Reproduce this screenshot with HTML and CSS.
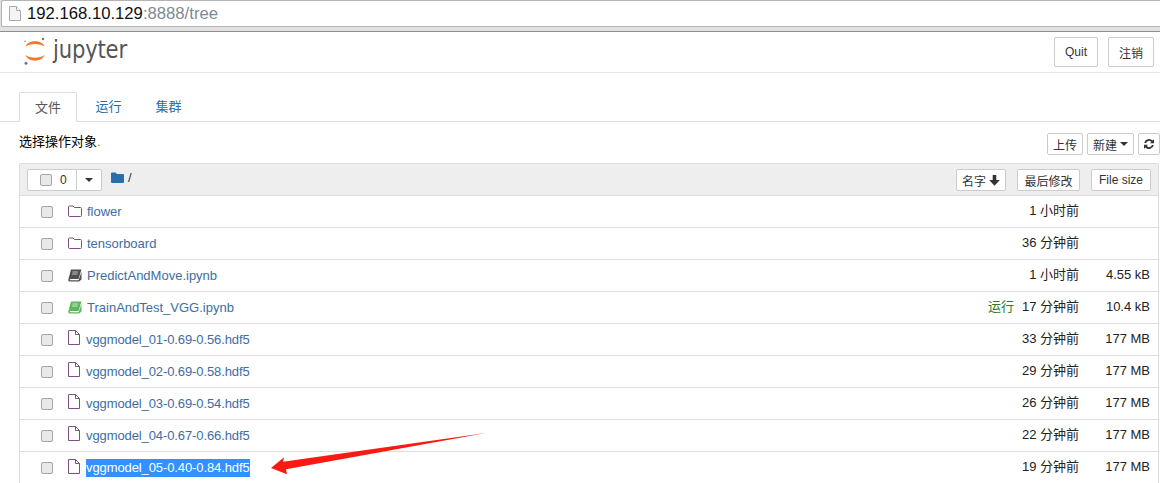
FILE: index.html
```html
<!DOCTYPE html>
<html lang="zh">
<head>
<meta charset="utf-8">
<title>Home</title>
<link rel="stylesheet" href="styles.css">
</head>
<body>
<div class="urlbar">
  <div class="urlbox">
    <svg class="page-ic" width="12" height="15" viewBox="0 0 12 15"><path d="M.5 .5H7.500L11.500 4.500V14.500H.5Z" fill="#f4f4f4" stroke="#a8a8a8"/><path d="M7.500 .5V4.500H11.500" fill="#fff" stroke="#a8a8a8"/></svg>
    <span class="url"><span class="host">192.168.10.129</span>:8888/tree</span>
  </div>
</div>
<header class="nav">
  <div class="logo">
    <svg width="24" height="28" viewBox="0 0 24 28"><path d="M1.500 9.500C4 2.500 18 2.500 20.500 9.500C16 6 6 6 1.500 9.500Z" fill="#f37726"/><path d="M1.500 18C4 25.500 18 25.500 20.500 18C16 21.500 6 21.500 1.500 18Z" fill="#f37726"/><circle cx="19" cy="2" r="1.200" fill="#767677"/><circle cx="2" cy="26.300" r="1.500" fill="#767677"/><circle cx="1" cy="4.300" r=".9" fill="#9e9e9e"/></svg>
    <span class="wordmark">jupyter</span>
  </div>
  <div class="nav-btns"><button class="btn big">Quit</button><button class="btn big">注销</button></div>
</header>
<nav class="tabs">
  <a class="tab active">文件</a><a class="tab">运行</a><a class="tab">集群</a>
</nav>
<div class="toolbar">
  <span class="hint">选择操作对象<i>.</i></span>
  <div class="tool-btns">
    <button class="btn sm">上传</button>
    <button class="btn sm">新建 <b class="caret"></b></button>
    <button class="btn sm icon"><svg width="12" height="12" viewBox="0 0 12 12"><path d="M1.200 5A4.900 4.900 0 0 1 9.600 2.600L11 1.200V5.300H6.900L8.300 3.900A3 3 0 0 0 3.100 5ZM10.800 7A4.900 4.900 0 0 1 2.400 9.400L1 10.800V6.700H5.100L3.700 8.100A3 3 0 0 0 8.900 7Z" fill="#333"/></svg></button>
  </div>
</div>
<section class="list">
  <div class="list-head">
    <div class="select-group"><span class="sel-left"><span class="cb"></span><span class="count">0</span></span><span class="sel-right"><b class="caret"></b></span></div>
    <svg class="crumb-ic" width="13" height="11" viewBox="0 0 13 11"><path d="M0 1.500Q0 .5 1 .5H4.500L6 2H12Q13 2 13 3V10Q13 11 12 11H1Q0 11 0 10Z" fill="#296eaa"/></svg>
    <span class="crumb">/</span>
    <div class="sorts">
      <button class="btn xs">名字 <svg width="11" height="11" viewBox="0 0 11 11"><path d="M3.700 0H7.300V5H10.800L5.500 10.800L.2 5H3.700Z" fill="#333"/></svg></button>
      <button class="btn xs">最后修改</button>
      <button class="btn xs">File size</button>
    </div>
  </div>
  <div class="row"><span class="cb"></span><svg class="ic" width="14" height="12" viewBox="0 0 14 12"><path d="M.5 2Q.5 1 1.500 1H5L6.500 2.500H12.500Q13.500 2.500 13.500 3.500V10.500Q13.500 11.500 12.500 11.500H1.500Q.5 11.500 .5 10.500Z" fill="none" stroke="#7d4f83"/></svg><a class="name">flower</a><span class="time">1 小时前</span><span class="size"></span></div>
  <div class="row"><span class="cb"></span><svg class="ic" width="14" height="12" viewBox="0 0 14 12"><path d="M.5 2Q.5 1 1.500 1H5L6.500 2.500H12.500Q13.500 2.500 13.500 3.500V10.500Q13.500 11.500 12.500 11.500H1.500Q.5 11.500 .5 10.500Z" fill="none" stroke="#7d4f83"/></svg><a class="name">tensorboard</a><span class="time">36 分钟前</span><span class="size"></span></div>
  <div class="row"><span class="cb"></span><svg class="ic book" width="14" height="13" viewBox="0 0 14 13"><path d="M3 .5H13.500L10.500 10H3Q1.500 10 1.800 11.200H10.500L13.500 3V10.500L11 12.500H1.500Q0 12.500 .3 10.500Z" fill="#505050"/><path d="M4.500 3H10M4 5H9.500" stroke="#ddd" stroke-width=".8"/></svg><a class="name">PredictAndMove.ipynb</a><span class="time">1 小时前</span><span class="size">4.55 kB</span></div>
  <div class="row"><span class="cb"></span><svg class="ic book" width="14" height="13" viewBox="0 0 14 13"><path d="M3 .5H13.500L10.500 10H3Q1.500 10 1.800 11.200H10.500L13.500 3V10.500L11 12.500H1.500Q0 12.500 .3 10.500Z" fill="#5cb85c"/><path d="M4.500 3H10M4 5H9.500" stroke="#e8f5e8" stroke-width=".8"/></svg><a class="name">TrainAndTest_VGG.ipynb</a><span class="running">运行</span><span class="time">17 分钟前</span><span class="size">10.4 kB</span></div>
  <div class="row"><span class="cb"></span><svg class="ic file" width="12" height="15" viewBox="0 0 12 15"><path d="M.5 .5H7.500L11.500 4.500V14.500H.5Z" fill="none" stroke="#7d4f83"/><path d="M7.500 .5V4.500H11.500" fill="none" stroke="#7d4f83"/></svg><a class="name tight">vggmodel_01-0.69-0.56.hdf5</a><span class="time">33 分钟前</span><span class="size">177 MB</span></div>
  <div class="row"><span class="cb"></span><svg class="ic file" width="12" height="15" viewBox="0 0 12 15"><path d="M.5 .5H7.500L11.500 4.500V14.500H.5Z" fill="none" stroke="#7d4f83"/><path d="M7.500 .5V4.500H11.500" fill="none" stroke="#7d4f83"/></svg><a class="name tight">vggmodel_02-0.69-0.58.hdf5</a><span class="time">29 分钟前</span><span class="size">177 MB</span></div>
  <div class="row"><span class="cb"></span><svg class="ic file" width="12" height="15" viewBox="0 0 12 15"><path d="M.5 .5H7.500L11.500 4.500V14.500H.5Z" fill="none" stroke="#7d4f83"/><path d="M7.500 .5V4.500H11.500" fill="none" stroke="#7d4f83"/></svg><a class="name tight">vggmodel_03-0.69-0.54.hdf5</a><span class="time">26 分钟前</span><span class="size">177 MB</span></div>
  <div class="row"><span class="cb"></span><svg class="ic file" width="12" height="15" viewBox="0 0 12 15"><path d="M.5 .5H7.500L11.500 4.500V14.500H.5Z" fill="none" stroke="#7d4f83"/><path d="M7.500 .5V4.500H11.500" fill="none" stroke="#7d4f83"/></svg><a class="name tight">vggmodel_04-0.67-0.66.hdf5</a><span class="time">22 分钟前</span><span class="size">177 MB</span></div>
  <div class="row"><span class="cb"></span><svg class="ic file" width="12" height="15" viewBox="0 0 12 15"><path d="M.5 .5H7.500L11.500 4.500V14.500H.5Z" fill="none" stroke="#7d4f83"/><path d="M7.500 .5V4.500H11.500" fill="none" stroke="#7d4f83"/></svg><a class="name tight selected">vggmodel_05-0.40-0.84.hdf5</a><span class="time">19 分钟前</span><span class="size">177 MB</span></div>
</section>
<svg class="arrow" width="218" height="44" viewBox="0 0 218 44"><path d="M216 1L13 29.700L14 25.300L1 36L17 42.300L16 37.300Z" fill="#fb1a12"/></svg>
</body>
</html>
```

FILE: styles.css
```css
html, body { margin: 0; padding: 0; }
body {
  position: relative;
  width: 1160px;
  height: 483px;
  overflow: hidden;
  background: #fff;
  color: #000;
  font: 13px/18px "Liberation Sans", Arial, "Noto Sans CJK SC", sans-serif;
}
button { font-family: inherit; }
.urlbar {
  box-sizing: border-box;
  height: 32px;
  background: #e2e2e2;
  border-bottom: 1px solid #8f8f8f;
}
.urlbox {
  box-sizing: border-box;
  height: 27px;
  margin-left: 1px;
  padding-left: 7px;
  display: flex;
  align-items: center;
  background: #fff;
  border: 1px solid #b4b4b4;
  border-right: 0;
  border-radius: 2px 0 0 2px;
}
.page-ic { margin-right: 6px; }
.url { font-size: 16.680px; color: #7e8a96; }
.host { color: #111; }
.nav {
  box-sizing: border-box;
  height: 41px;
  padding: 5px 6px 0 24px;
  display: flex;
  justify-content: space-between;
  border-bottom: 1px solid #e7e7e7;
}
.logo { display: flex; align-items: flex-start; height: 30px; }
.wordmark { margin: -2px 0 0 5px; font: 24px/30px "DejaVu Sans", sans-serif; color: #555; letter-spacing: -.2px; transform: scaleX(.88); transform-origin: left; }
.nav-btns { display: flex; gap: 10px; }
.btn {
  box-sizing: border-box;
  background: #fff;
  border: 1px solid #ccc;
  border-radius: 2px;
  color: #333;
  padding: 0;
  font-size: 12px;
  display: inline-flex;
  align-items: center;
  justify-content: center;
  gap: 3px;
}
.big { height: 30px; width: 44px; }
.big + .big { width: 46px; }
.tabs {
  box-sizing: border-box;
  height: 49px;
  padding: 19px 0 0 19px;
  display: flex;
  border-bottom: 1px solid #ddd;
}
.tab {
  box-sizing: border-box;
  height: 30px;
  width: 60px;
  line-height: 29px;
  text-align: center;
  color: #296eaa;
}
.tab.active {
  width: 58px;
  margin-right: 1.500px;
  color: #555;
  background: #fff;
  border: 1px solid #ddd;
  border-bottom-color: #fff;
  border-radius: 2px 2px 0 0;
}
.toolbar {
  box-sizing: border-box;
  height: 41px;
  padding: 11px 0 0 19px;
  display: flex;
  justify-content: space-between;
}
.hint { line-height: 18px; }
.hint i { color: #c60; font-style: normal; }
.tool-btns { display: flex; gap: 4px; }
.sm { height: 22px; width: 36px; }
.sm:nth-child(2) { width: 47px; }
.sm.icon { width: 22px; }
.caret { display: inline-block; border-top: 4px solid #333; border-left: 4px solid transparent; border-right: 4px solid transparent; }
.list {
  box-sizing: border-box;
  margin: 0 1px 0 19px;
  border: 1px solid #ddd;
  border-bottom: 0;
  border-radius: 2px 2px 0 0;
  height: 320px;
}
.list-head {
  box-sizing: border-box;
  height: 32px;
  padding: 5px 7px 0 7px;
  display: flex;
  align-items: flex-start;
  background: #eee;
  border-bottom: 1px solid #ddd;
}
.select-group {
  box-sizing: border-box;
  height: 22px;
  width: 75px;
  display: flex;
  background: #fff;
  border: 1px solid #ccc;
  border-radius: 2px;
}
.sel-left { width: 49px; display: flex; align-items: center; padding-left: 12px; box-sizing: border-box; gap: 8px; border-right: 1px solid #ccc; }
.sel-right { flex: 1; display: flex; align-items: center; justify-content: center; }
.count { font-size: 12px; color: #333; }
.cb {
  box-sizing: border-box;
  width: 12px;
  height: 12px;
  flex: none;
  border: 1px solid #a5a5a5;
  border-radius: 2px;
  background: #e9e9e9;
}
.crumb-ic { margin: 3px 0 0 9px; }
.crumb { margin: 0 0 0 4px; color: #333; font-size: 13px; }
.sorts { margin-left: auto; display: flex; gap: 11px; }
.xs { height: 22px; width: 60px; }
.xs:nth-child(1) { width: 50px; }
.xs:nth-child(2) { width: 63px; }
.row {
  box-sizing: border-box;
  height: 32px;
  padding: 0 8px 0 21px;
  display: flex;
  align-items: center;
  border-bottom: 1px solid #ddd;
}
.row:last-child { border-bottom: 0; }
.row .cb { margin-right: 15px; }
.ic { margin-right: 5px; flex: none; margin-top: -2px; width: 14px; }
.ic.file { width: 12px; margin-right: 6px; margin-top: -4px; }
.ic.book { margin-top: -1px; }
.name { color: #3c6ea5; white-space: nowrap; }
.name.tight { letter-spacing: -.1px; }
.selected { background: #3390ff; color: #fff; }
.running { margin-left: auto; margin-bottom: 2px; color: #2d7a2d; margin-right: 8px; }
.time { margin-left: auto; margin-bottom: 2px; text-align: right; color: #222; }
.running + .time { margin-left: 0; }
.size { width: 71px; margin-bottom: 2px; text-align: right; color: #222; }
.arrow { position: absolute; left: 270px; top: 432px; }
```
